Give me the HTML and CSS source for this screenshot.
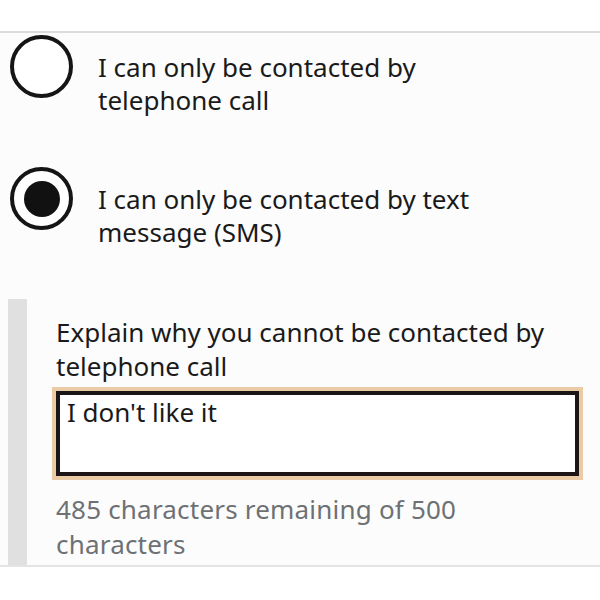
FILE: index.html
```html
<!DOCTYPE html>
<html lang="en">
<head>
<meta charset="utf-8">
<title>Contact preference</title>
<link rel="stylesheet" href="styles.css">
</head>
<body>
<div class="page">
  <div class="form-area">
    <div class="radio">
      <span class="radio-circle"></span>
      <span class="radio-label">I can only be contacted by telephone call</span>
    </div>
    <div class="radio">
      <span class="radio-circle radio-circle--checked"></span>
      <span class="radio-label">I can only be contacted by text message (SMS)</span>
    </div>
    <div class="conditional">
      <div class="cond-label">Explain why you cannot be contacted by telephone call</div>
      <div class="textarea">I don't like it</div>
      <div class="hint">485 characters remaining of 500 characters</div>
    </div>
  </div>
</div>
</body>
</html>
```
FILE: styles.css
```css
html, body {
  margin: 0;
  padding: 0;
  background: #ffffff;
}
body {
  font-family: "Noto Sans", "Open Sans", sans-serif;
  color: #1a1a1a;
  width: 600px;
  height: 600px;
  overflow: hidden;
}
.page {
  padding-top: 31px;
}
.form-area {
  background: #fcfcfc;
  border-top: 2px solid #dcdcdc;
  border-bottom: 2px solid #e4e4e4;
  padding-top: 2px;
}
.radio {
  display: flex;
  align-items: flex-start;
  margin-bottom: 50px;
}
.radio-circle {
  flex: none;
  box-sizing: border-box;
  width: 63px;
  height: 63px;
  margin-left: 10px;
  border: 4px solid #151515;
  border-radius: 50%;
  background: #fff;
  display: flex;
  align-items: center;
  justify-content: center;
}
.radio-circle--checked::after {
  content: "";
  width: 36px;
  height: 36px;
  border-radius: 50%;
  background: #111;
}
.radio-label {
  margin-left: 25px;
  padding-top: 16px;
  font-size: 26px;
  line-height: 33px;
  max-width: 400px;
}
.conditional {
  margin-left: 8px;
  border-left: 19px solid #e0e0e0;
  padding: 16px 0 3px 29px;
}
.cond-label {
  font-size: 26px;
  line-height: 34px;
  margin-bottom: 8px;
}
.textarea {
  box-sizing: border-box;
  width: 523px;
  height: 85px;
  border: 4px solid #1c1515;
  outline: 4px solid #ebcaa6;
  background: #fff;
  font-size: 26px;
  line-height: 33px;
  padding: 1px 7px;
}
.hint {
  margin-top: 16px;
  font-size: 26px;
  line-height: 35px;
  letter-spacing: 0.2px;
  color: #6d7174;
  max-width: 420px;
}
```
